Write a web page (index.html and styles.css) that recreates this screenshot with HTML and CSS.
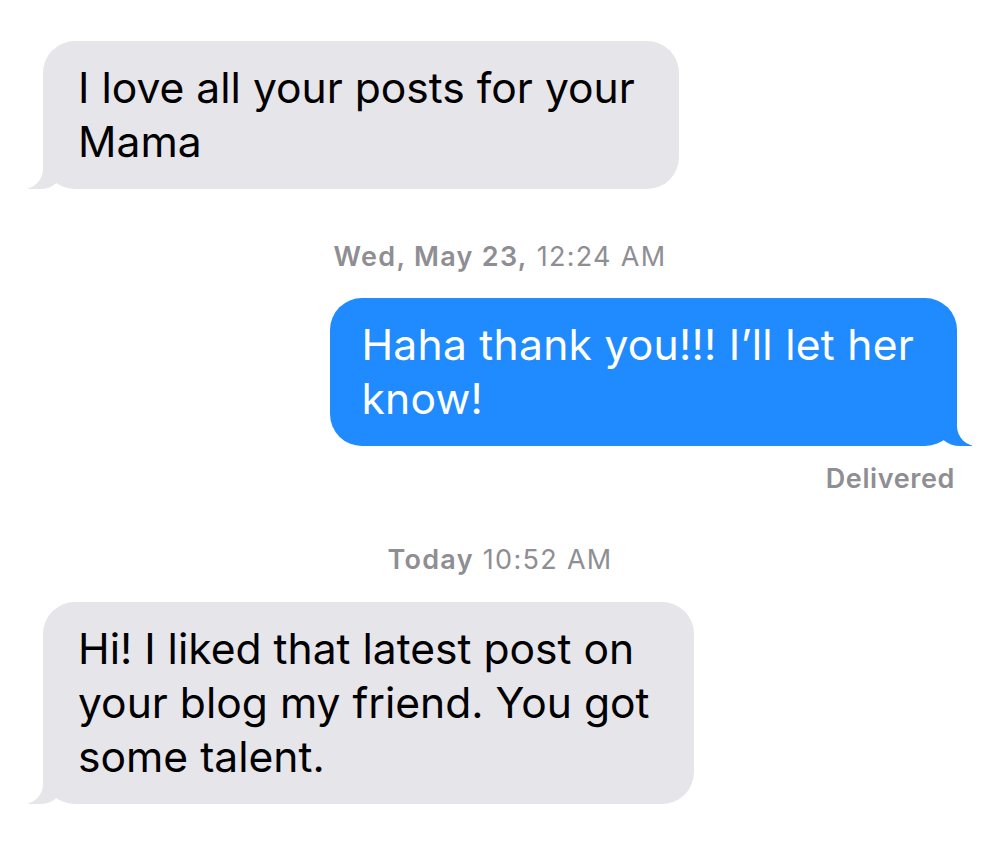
FILE: index.html
```html
<!DOCTYPE html>
<html lang="en">
<head>
<meta charset="utf-8">
<title>Messages</title>
<link rel="stylesheet" href="styles.css">
</head>
<body>
<main class="thread">
  <div class="bubble received b1">I love all your posts for your<br>Mama</div>
  <div class="stamp ts1"><strong>Wed, May 23,</strong> 12:24 AM</div>
  <div class="bubble sent b2">Haha thank you!!! I’ll let her<br>know!</div>
  <div class="status">Delivered</div>
  <div class="stamp ts2"><strong>Today</strong> 10:52 AM</div>
  <div class="bubble received b3">Hi! I liked that latest post on<br>your blog my friend. You got<br>some talent.</div>
</main>
</body>
</html>
```
FILE: styles.css
```css
html, body {
  margin: 0;
  padding: 0;
  background: #ffffff;
}

.thread {
  display: flex;
  flex-direction: column;
  padding: 41px 43px 0 43px;
  font-family: Inter, "Liberation Sans", sans-serif;
}

.bubble {
  position: relative;
  width: fit-content;
  box-sizing: border-box;
  padding: 20px 44px 20px 35px;
  border-radius: 32px;
  font-size: 42.6px;
  line-height: 54px;
  white-space: nowrap;
}

.received {
  align-self: flex-start;
  background: #e5e5ea;
  color: #000000;
}

.sent {
  align-self: flex-end;
  background: #1f8bff;
  color: #ffffff;
  padding: 20px 43px 20px 31px;
  letter-spacing: 0.25px;
}

.received::before,
.received::after,
.sent::before,
.sent::after {
  content: "";
  position: absolute;
  bottom: 0;
  height: 32px;
}

.received::before {
  left: -15px;
  width: 34px;
  background: #e5e5ea;
  border-bottom-right-radius: 22px 18px;
}

.received::after {
  left: -40px;
  width: 40px;
  background: #ffffff;
  border-bottom-right-radius: 20px;
}

.sent::before {
  right: -15px;
  width: 34px;
  background: #1f8bff;
  border-bottom-left-radius: 22px 18px;
}

.sent::after {
  right: -40px;
  width: 40px;
  background: #ffffff;
  border-bottom-left-radius: 20px;
}

.stamp,
.status {
  font-size: 27px;
  line-height: 32px;
  color: #8e8e93;
}

.stamp {
  align-self: center;
  text-align: center;
  letter-spacing: 1.3px;
}

.stamp strong,
.status {
  font-weight: 600;
}

.ts1 { margin-top: 52px; }
.b2 { margin-top: 25px; }
.status {
  align-self: flex-end;
  margin-top: 17px;
  margin-right: 2px;
  letter-spacing: 0.6px;
}
.ts2 { margin-top: 49px; }
.b3 { margin-top: 26px; }
```
